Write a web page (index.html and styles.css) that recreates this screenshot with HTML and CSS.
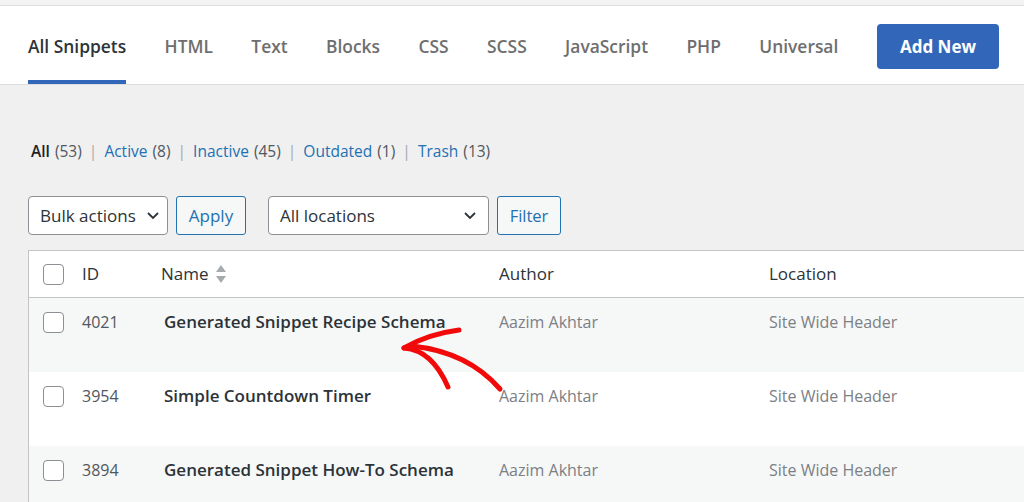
FILE: index.html
```html
<!DOCTYPE html>
<html>
<head>
<meta charset="utf-8">
<link rel="stylesheet" href="styles.css">
</head>
<body>
<div class="topband"></div>
<header class="header">
  <nav class="tabs">
    <a class="tab active">All Snippets</a>
    <a class="tab">HTML</a>
    <a class="tab">Text</a>
    <a class="tab">Blocks</a>
    <a class="tab">CSS</a>
    <a class="tab">SCSS</a>
    <a class="tab">JavaScript</a>
    <a class="tab">PHP</a>
    <a class="tab">Universal</a>
  </nav>
  <a class="add-new">Add New</a>
</header>
<main class="content">
  <div class="status">
    <span class="cur">All</span> <span class="count">(53)</span> <span class="sep">|</span>
    <a>Active</a> <span class="count">(8)</span> <span class="sep">|</span>
    <a>Inactive</a> <span class="count">(45)</span> <span class="sep">|</span>
    <a>Outdated</a> <span class="count">(1)</span> <span class="sep">|</span>
    <a>Trash</a> <span class="count">(13)</span>
  </div>
  <div class="filters">
    <div class="select bulk">Bulk actions<svg class="chev" viewBox="0 0 12 8" width="12" height="8"><polyline points="1,1 6,6 11,1" fill="none" stroke="#2c3338" stroke-width="1.8"/></svg></div>
    <button class="btn apply">Apply</button>
    <div class="select loc">All locations<svg class="chev" viewBox="0 0 12 8" width="12" height="8"><polyline points="1,1 6,6 11,1" fill="none" stroke="#2c3338" stroke-width="1.8"/></svg></div>
    <button class="btn filter">Filter</button>
  </div>
  <div class="table">
    <div class="row head">
      <div class="cell cb"><span class="box"></span></div>
      <div class="cell">ID</div>
      <div class="cell">Name <svg class="sort" viewBox="0 0 12 20" width="12" height="20"><polygon points="6,1 11,8 1,8" fill="#a7aaad"/><polygon points="1,12 11,12 6,19" fill="#a7aaad"/></svg></div>
      <div class="cell">Author</div>
      <div class="cell">Location</div>
    </div>
    <div class="row alt">
      <div class="cell cb"><span class="box"></span></div>
      <div class="cell id">4021</div>
      <div class="cell name">Generated Snippet Recipe Schema</div>
      <div class="cell muted">Aazim Akhtar</div>
      <div class="cell muted">Site Wide Header</div>
    </div>
    <div class="row">
      <div class="cell cb"><span class="box"></span></div>
      <div class="cell id">3954</div>
      <div class="cell name">Simple Countdown Timer</div>
      <div class="cell muted">Aazim Akhtar</div>
      <div class="cell muted">Site Wide Header</div>
    </div>
    <div class="row alt">
      <div class="cell cb"><span class="box"></span></div>
      <div class="cell id">3894</div>
      <div class="cell name">Generated Snippet How-To Schema</div>
      <div class="cell muted">Aazim Akhtar</div>
      <div class="cell muted">Site Wide Header</div>
    </div>
  </div>
</main>
<svg class="arrow" viewBox="0 0 1024 502" width="1024" height="502">
  <g fill="none" stroke="#f20a0a" stroke-width="5" stroke-linecap="round" stroke-linejoin="round">
    <path d="M404 348 Q428 334 459 330"/>
    <path d="M404 348 Q432 350 448 387"/>
    <path d="M412 346 Q468 352 500 389"/>
  </g>
</svg>
</body>
</html>
```

FILE: styles.css
```css
* { box-sizing: border-box; }
html, body { margin: 0; padding: 0; }
body {
  width: 1024px;
  height: 502px;
  overflow: hidden;
  background: #f0f0f1;
  font-family: "Open Sans", "Liberation Sans", sans-serif;
  color: #2c3338;
  position: relative;
}
.topband {
  height: 6px;
  background: #f3f3f3;
  border-bottom: 1px solid #dcdcde;
}
.header {
  height: 79px;
  background: #fff;
  border-bottom: 1px solid #dcdcde;
  display: flex;
  align-items: stretch;
  padding-left: 28px;
  padding-right: 25px;
}
.tabs {
  display: flex;
  gap: 38.4px;
  align-items: stretch;
}
.tab {
  display: flex;
  align-items: center;
  padding-top: 6px;
  border-bottom: 4px solid transparent;
  font-size: 17.4px;
  font-weight: 600;
  color: #6e6e6e;
}
.tab.active {
  color: #2c3338;
  border-bottom-color: #3166b8;
}
.add-new {
  margin-left: auto;
  align-self: flex-start;
  margin-top: 18px;
  width: 122px;
  height: 45px;
  background: #3166b8;
  color: #fff;
  border-radius: 4px;
  font-size: 17px;
  font-weight: 700;
  display: flex;
  align-items: center;
  justify-content: center;
}
.content {
  padding-left: 28px;
}
.status {
  margin-top: 56px;
  padding-left: 3px;
  font-size: 15.5px;
  line-height: 20px;
  color: #50575e;
  word-spacing: 1px;
}
.status .cur { color: #1d2327; font-weight: 600; }
.status a { color: #2271b1; }
.status .sep { color: #a7aaad; margin: 0 2px; }
.filters {
  margin-top: 35px;
  display: flex;
  gap: 8px;
  height: 39px;
}
.select {
  background: #fff;
  border: 1px solid #8c8f94;
  border-radius: 4px;
  font-size: 17px;
  color: #2c3338;
  display: flex;
  align-items: center;
  justify-content: space-between;
  padding: 0 8px 0 11px;
}
.select.bulk { width: 140px; }
.select.loc { width: 221px; margin-left: 14px; padding-right: 12px; }
.chev { display: block; }
.btn {
  font-family: inherit;
  font-size: 17px;
  color: #2271b1;
  background: #f6f7f7;
  border: 1px solid #2271b1;
  border-radius: 3px;
  height: 39px;
}
.btn.apply { width: 70px; padding: 0; }
.btn.filter { width: 64px; padding: 0; font-size: 16.5px; }
.table {
  margin-top: 15px;
  width: 1010px;
  background: #fff;
  border: 1px solid #c3c4c7;
}
.row {
  display: grid;
  grid-template-columns: 53px 79px 338px 270px 1fr;
  height: 74px;
  padding-top: 14px;
  font-size: 16px;
  line-height: 20px;
}
.row.head {
  height: 47px;
  padding-top: 13px;
  border-bottom: 1px solid #c3c4c7;
  font-size: 17px;
  color: #2c3338;
}
.row.alt { background: #f6f7f7; }
.cell { display: flex; align-items: center; height: 20px; white-space: nowrap; }
.cell.cb { padding-left: 14px; }
.box {
  width: 21px;
  height: 21px;
  border: 1px solid #8c8f94;
  border-radius: 4px;
  background: #fff;
}
.sort { margin-left: 6px; }
.id { color: #50575e; }
.name { font-weight: 600; font-size: 17px; padding-left: 3px; color: #2c3338; }
.muted { color: #7c8085; }
.arrow {
  position: absolute;
  left: 0;
  top: 0;
  pointer-events: none;
}
```
